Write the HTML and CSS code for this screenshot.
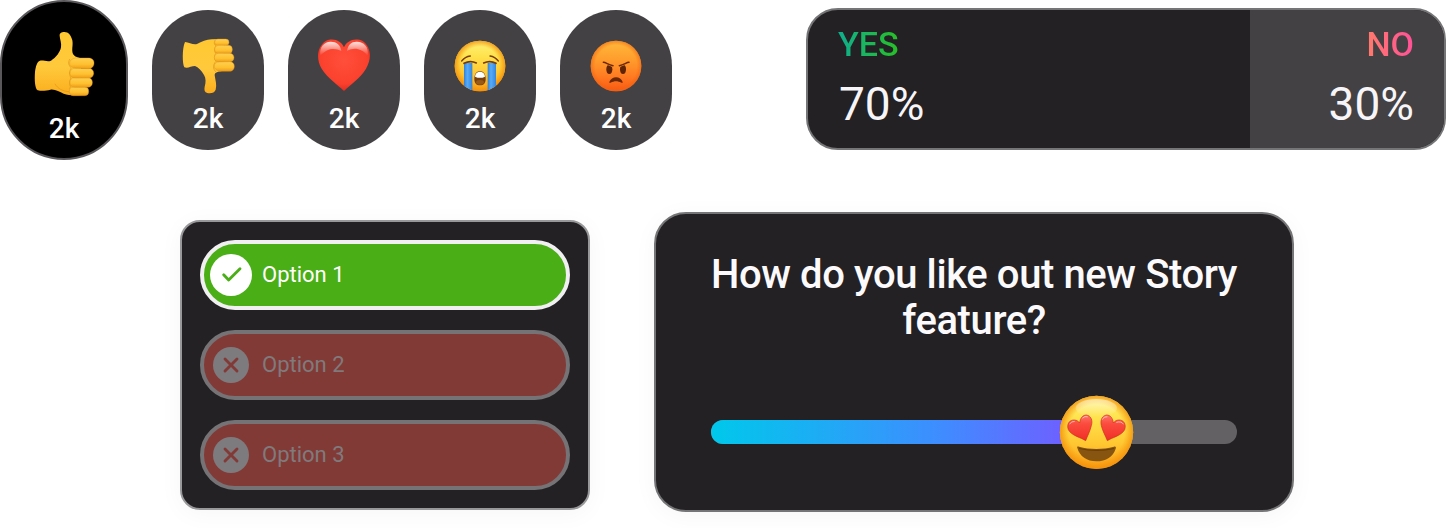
FILE: index.html
```html
<!DOCTYPE html>
<html lang="en">
<head>
	<meta charset="utf-8">
	<title>Story widgets</title>
	<link rel="stylesheet" href="styles.css">
</head>
<body>

	<div class="row row-top">
		<div class="reactions">
			<div class="reaction active">
				<svg class="emoji" width="61" height="66" viewBox="102 93 183 198">
					<defs>
						<linearGradient id="hand" x1="0" y1="0" x2="0" y2="1">
							<stop offset="0" stop-color="#ffc832"/>
							<stop offset=".55" stop-color="#ffc93c"/>
							<stop offset="1" stop-color="#fbad1c"/>
						</linearGradient>
						<linearGradient id="finger" x1="0" y1="0" x2="0" y2="1">
							<stop offset="0" stop-color="#ffd051"/>
							<stop offset=".6" stop-color="#ffc02f"/>
							<stop offset="1" stop-color="#ee9c18"/>
						</linearGradient>
					</defs>
					<path fill="url(#hand)" d="M179 108C178 99 184 96 193 96C206 96 213 106 217 121C220 137 214 148 219 162C222 168 229 172 240 174L250 284C232 287 207 287 191 281C178 276 166 267 151 269C140 272 126 274 113 271C105 266 103 241 105 216C107 200 111 184 120 182C133 181 143 186 153 182C168 173 180 157 183 142C185 129 180 119 179 108Z"/>
					<path fill="none" stroke="#e39a1c" stroke-width="3" stroke-linecap="round" opacity=".75" d="M209 178C202 190 208 198 214 204C207 214 207 224 213 234C208 243 207 251 211 260C208 268 207 275 212 282M165 252C174 267 189 274 207 275"/>
					<g fill="url(#finger)" stroke="#dc9018" stroke-width="1.2">
						<rect x="208" y="261" width="58" height="26" rx="12"/>
						<rect x="210" y="233" width="67" height="29" rx="13"/>
						<rect x="210" y="205" width="71" height="29" rx="14"/>
						<path d="M209 193C207 182 217 174 231 174H266C277 174 282 181 282 189C282 199 276 206 265 206L224 204C216 203 211 200 209 193Z"/>
					</g>
				</svg>
				<span>2k</span>
			</div>
			<div class="reaction">
				<svg class="emoji" width="54" height="56" viewBox="108 114 162 168">
					<path fill="url(#hand)" d="M120 126C132 128 145 135 156 132C170 125 184 118 200 118L237 117L232 213C220 215 209 216 209 226C211 240 216 255 212 269C209 278 199 281 187 279C179 277 177 270 179 260C183 247 183 235 177 225C169 211 160 202 150 198C138 198 129 206 118 202C112 192 111 146 120 126Z"/>
					<path fill="none" stroke="#e0941b" stroke-width="3" stroke-linecap="round" opacity=".75" d="M211 120C206 127 207 134 213 137C207 145 207 153 212 160C207 169 207 178 213 184C204 193 203 207 212 215"/>
					<g fill="url(#finger)" stroke="#dc9018" stroke-width="1.2">
						<rect x="209" y="117" width="43" height="20" rx="10"/>
						<rect x="209" y="136" width="53" height="25" rx="12"/>
						<rect x="208" y="160" width="59" height="26" rx="13"/>
						<path d="M208 198C208 190 214 186 223 186L253 185C263 185 268 190 268 199C268 208 262 214 254 214H229C217 214 208 208 208 198Z"/>
					</g>
				</svg>
				<span>2k</span>
			</div>
			<div class="reaction">
				<svg class="emoji" width="54" height="56" viewBox="111 117 162 168">
					<defs>
						<radialGradient id="heart" cx=".5" cy=".4" r=".65">
							<stop offset="0" stop-color="#ff4f3b"/>
							<stop offset=".7" stop-color="#fb412d"/>
							<stop offset="1" stop-color="#d9251c"/>
						</radialGradient>
						<linearGradient id="shine" x1="0" y1="0" x2="0" y2="1">
							<stop offset="0" stop-color="#fff" stop-opacity=".85"/>
							<stop offset="1" stop-color="#fff" stop-opacity="0"/>
						</linearGradient>
					</defs>
					<path fill="url(#heart)" d="M192 276C175 258 143 238 125 209C107 179 112 143 137 126C159 115 184 125 192 145C200 125 225 115 248 126C272 142 277 178 258 209C241 238 209 258 192 276Z"/>
					<path fill="url(#shine)" d="M121 170C117 143 134 127 153 128C169 128 181 136 184 156C166 146 142 146 121 170Z"/>
					<path fill="url(#shine)" d="M201 156C204 136 216 127 231 128C251 128 267 143 263 170C244 147 221 145 201 156Z"/>
				</svg>
				<span>2k</span>
			</div>
			<div class="reaction">
				<svg class="emoji" width="52" height="56" viewBox="117 114 156 168">
					<defs>
						<linearGradient id="face" x1="0" y1="0" x2="0" y2="1">
							<stop offset="0" stop-color="#fff278"/>
							<stop offset=".3" stop-color="#ffe34d"/>
							<stop offset=".65" stop-color="#ffc832"/>
							<stop offset="1" stop-color="#fb9f16"/>
						</linearGradient>
						<radialGradient id="rim" cx=".5" cy=".5" r=".5">
							<stop offset=".76" stop-color="#f5930c" stop-opacity="0"/>
							<stop offset="1" stop-color="#f28d08" stop-opacity=".8"/>
						</radialGradient>
						<linearGradient id="tear" x1="0" y1="0" x2="1" y2="0">
							<stop offset="0" stop-color="#2f80de"/>
							<stop offset=".4" stop-color="#58acf5"/>
							<stop offset="1" stop-color="#3384e0"/>
						</linearGradient>
						<clipPath id="round"><circle cx="195" cy="198" r="76"/></clipPath>
					</defs>
					<circle cx="195" cy="198" r="76" fill="url(#face)"/>
					<circle cx="195" cy="198" r="76" fill="url(#rim)"/>
					<g clip-path="url(#round)">
						<rect x="147" y="189" width="25" height="88" fill="url(#tear)"/>
						<rect x="218" y="189" width="25" height="88" fill="url(#tear)"/>
					</g>
					<g fill="none" stroke="#7a3b0b" stroke-width="4" stroke-linecap="round">
						<path d="M140 183Q150 170 166 168M250 183Q240 170 225 168"/>
						<path stroke-width="5" d="M147 190Q166 180 184 189M206 189Q225 180 243 190"/>
					</g>
					<path fill="#79400d" d="M195 213C207 213 212 225 212 237C212 249 206 256 195 256C184 256 178 249 178 237C178 225 183 213 195 213Z"/>
					<path fill="#fff" d="M195 215C205 215 209 222 210 230Q195 237 180 230C181 222 185 215 195 215Z"/>
					<ellipse cx="195" cy="247" rx="12" ry="7" fill="#9a5a17"/>
				</svg>
				<span>2k</span>
			</div>
			<div class="reaction">
				<svg class="emoji" width="52" height="56" viewBox="120 114 156 168">
					<defs>
						<linearGradient id="angry" x1="0" y1="0" x2="0" y2="1">
							<stop offset="0" stop-color="#ffb93a"/>
							<stop offset=".35" stop-color="#ff9f2e"/>
							<stop offset=".7" stop-color="#ff7c22"/>
							<stop offset="1" stop-color="#f95812"/>
						</linearGradient>
						<radialGradient id="angryrim" cx=".5" cy=".5" r=".5">
							<stop offset=".82" stop-color="#f06310" stop-opacity="0"/>
							<stop offset="1" stop-color="#f06310" stop-opacity=".6"/>
						</radialGradient>
					</defs>
					<circle cx="198" cy="198" r="76" fill="url(#angry)"/>
					<circle cx="198" cy="198" r="76" fill="url(#angryrim)"/>
					<ellipse cx="178" cy="208" rx="9" ry="14" fill="#5f2305"/>
					<ellipse cx="219" cy="208" rx="9" ry="14" fill="#5f2305"/>
					<path fill="#ff9029" d="M160 185L189 196L189 202L160 190ZM237 185L208 196L208 202L237 190Z"/>
					<path fill="none" stroke="#6b2806" stroke-width="4.5" stroke-linecap="round" d="M160 187C168 187 174 194 189 197M237 187C229 187 223 194 208 197"/>
					<path fill="#6b2806" d="M178 246C181 237 190 232 198 232C207 232 215 237 218 246C219 249 216 249 214 248C204 242 192 242 182 248C180 249 177 249 178 246Z"/>
				</svg>
				<span>2k</span>
			</div>
		</div>

		<div class="poll">
			<div class="poll-side yes">
				<b>YES</b>
				<span>70%</span>
			</div>
			<div class="poll-side no">
				<b>NO</b>
				<span>30%</span>
			</div>
		</div>
	</div>

	<div class="row row-bottom">
		<div class="quiz">
			<div class="option right">
				<svg class="mark" viewBox="0 0 126 126"><circle cx="63" cy="63" r="63" fill="#fff"/><path d="M41 62L56 78L90 44" stroke="#4aae16" stroke-width="8.500"/></svg>
				<span>Option 1</span>
			</div>
			<div class="option wrong">
				<svg class="mark" viewBox="0 0 108 108"><circle cx="54" cy="54" r="54" fill="#7d7b7e"/><path d="M36 36L72 72M72 36L36 72" stroke="#823a36" stroke-width="8.500"/></svg>
				<span>Option 2</span>
			</div>
			<div class="option wrong">
				<svg class="mark" viewBox="0 0 108 108"><circle cx="54" cy="54" r="54" fill="#7d7b7e"/><path d="M36 36L72 72M72 36L36 72" stroke="#823a36" stroke-width="8.500"/></svg>
				<span>Option 3</span>
			</div>
		</div>

		<div class="slider-card">
			<h2>How do you like out new Story feature?</h2>
			<div class="track">
				<div class="fill" style="width: 73.2%">
					<svg class="thumb" width="75" height="75" viewBox="57 45 225 225">
						<defs>
							<linearGradient id="eye" x1="0" y1="0" x2="0" y2="1">
								<stop offset="0" stop-color="#ff7468"/>
								<stop offset=".35" stop-color="#fb4b3e"/>
								<stop offset="1" stop-color="#f02d27"/>
							</linearGradient>
						</defs>
						<circle cx="169.500" cy="157" r="110" fill="url(#face)"/>
						<circle cx="169.500" cy="157" r="110" fill="url(#rim)"/>
						<ellipse cx="169" cy="84" rx="62" ry="27" fill="url(#shine)" opacity=".6"/>
						<g fill="url(#eye)" stroke="#c93020" stroke-width="2">
							<path d="M137 182C124 173 94 167 85 149C79 132 89 119 103 120C111 120 116 125 119 129C120 115 128 105 139 105C153 107 159 121 154 137C150 154 143 166 137 182Z"/>
							<path d="M202 182C215 173 245 167 254 149C260 132 250 119 236 120C228 120 223 125 220 129C219 115 211 105 200 105C186 107 180 121 184 137C188 154 196 166 202 182Z"/>
						</g>
						<path fill="none" stroke="#fff" stroke-opacity=".55" stroke-width="3" stroke-linecap="round" d="M89 132Q94 123 103 124M128 114Q134 107 142 110M187 118Q192 108 201 110M230 127Q243 122 250 132"/>
						<path fill="#87550f" d="M112 204C110 200 113 199 117 200C150 209 188 209 222 200C227 199 229 201 227 206C220 230 198 244 169 244C141 244 119 229 112 204Z"/>
						<path fill="#6a3f08" d="M116 203C150 211 189 211 223 203L222 207C190 215 150 215 118 207Z"/>
					</svg>
				</div>
			</div>
		</div>
	</div>

</body>
</html>
```

FILE: styles.css
```css
* {padding: 0; margin: 0; box-sizing: border-box;}
body{width: 1446px; height: 528px; overflow: hidden; background: #fff; font-family: Roboto, "Liberation Sans", sans-serif;}
svg{display: block; flex: none;}
.row{display: flex;}
.row-top{justify-content: space-between; height: 160px;}
.row-bottom{padding: 52px 0 0 180px; gap: 64px; align-items: flex-start;}

.reactions{display: flex; align-items: center; gap: 24px;}
.reaction{display: flex; flex-direction: column; align-items: center; width: 112px; height: 140px; padding-top: 28px; border-radius: 56px; background: #444144; color: #fff;}
.reaction span{margin-top: 9px; font-size: 28px; font-weight: 500; line-height: 32px;}
.reaction.active{width: 128px; height: 160px; padding-top: 29px; border: 2px solid #59575a; border-radius: 64px; background: #000;}
.reaction.active span{margin-top: 16px;}

.poll{display: flex; width: 640px; height: 142px; margin-top: 8px; border: 2px solid #757476; border-radius: 32px; background: #232124; overflow: hidden;}
.poll-side{display: flex; flex-direction: column; padding: 14px 30px 0; color: #f7f5f8;}
.poll-side b{font-size: 34px; font-weight: 500; line-height: 40px; -webkit-background-clip: text; background-clip: text; color: transparent;}
.poll-side span{margin-top: 13px; font-size: 46px; line-height: 54px;}
.poll .yes{width: 442px; align-items: flex-start;}
.poll .yes b{background-image: linear-gradient(90deg, #0fae8e, #27c025);}
.poll .yes span{padding-left: 1px;}
.poll .no{flex: 1; align-items: flex-end; background: #444144;}
.poll .no b{background-image: linear-gradient(90deg, #ff7a6b, #ff5197);}

.quiz{display: flex; flex-direction: column; gap: 20px; width: 410px; height: 290px; margin-top: 8px; padding: 18px; border: 2px solid #98979a; border-radius: 20px; background: #232124; box-shadow: 0 4px 24px rgba(0,0,0,.04);}
.option{display: flex; align-items: center; gap: 10px; height: 70px; padding-left: 6px; border: 4px solid #f1eff2; border-radius: 35px; background: #4aae16; color: #fff; font-size: 22px;}
.option span{padding-bottom: 2px;}
.option .mark{width: 42px; height: 42px; fill: none; stroke-linecap: round; stroke-linejoin: round;}
.option.wrong{gap: 13px; padding-left: 9px; border-color: #757376; background: #823a36; color: #807a7d;}
.option.wrong .mark{width: 36px; height: 36px;}

.slider-card{width: 640px; height: 300px; padding: 38px 55px 0; border: 2px solid #757476; border-radius: 32px; background: #232124; box-shadow: 0 4px 24px rgba(0,0,0,.04);}
.slider-card h2{margin: 0 -10px; color: #fcfafd; font-size: 40px; font-weight: 500; line-height: 46px; letter-spacing: -.4px; text-align: center;}
.track{height: 24px; margin-top: 76px; border-radius: 12px; background: #636164;}
.fill{position: relative; height: 24px; border-radius: 12px 0 0 12px; background: linear-gradient(90deg, #00c8eb, #3f8cff 60%, #7a55ff);}
.thumb{position: absolute; right: -38px; top: -25px;}
```
